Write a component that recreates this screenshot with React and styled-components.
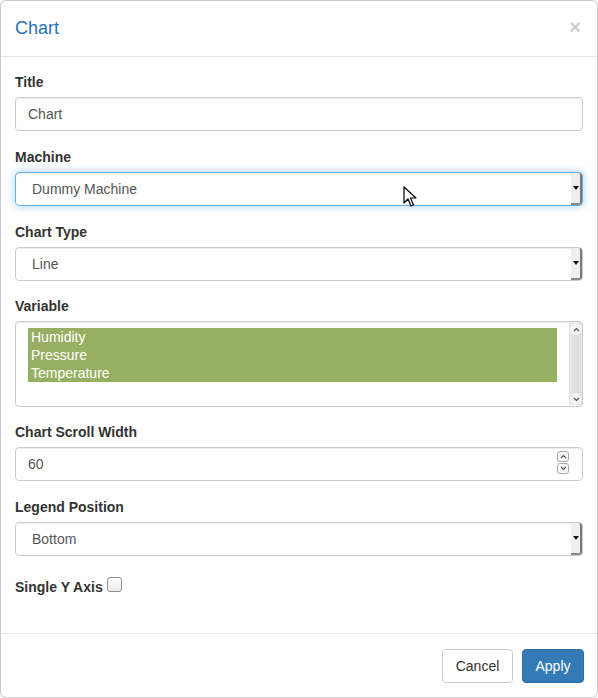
import React from "react";
import styled, { createGlobalStyle } from "styled-components";

const Global = createGlobalStyle`
  html, body { margin: 0; padding: 0; background: #fff; }
  body { font-family: "Liberation Sans", Arial, sans-serif; font-size: 14px; line-height: 1.42857; color: #333; }
  * { box-sizing: border-box; }
`;

const Modal = styled.div`
  position: relative;
  width: 598px;
  height: 698px;
  border: 1px solid rgba(0,0,0,0.2);
  border-radius: 6px;
  background: #fff;
  display: flex;
  flex-direction: column;
  overflow: hidden;
`;

const Header = styled.div`
  display: flex;
  align-items: center;
  justify-content: space-between;
  padding: 14px 15px 15px 14px;
  border-bottom: 1px solid #e5e5e5;
`;

const Title = styled.h4`
  margin: 0;
  font-size: 18px;
  font-weight: 400;
  line-height: 26px;
  color: #2573b6;
`;

const Close = styled.span`
  font-size: 20px;
  font-weight: 700;
  line-height: 1;
  color: #000;
  opacity: 0.2;
  margin-right: 1px;
  margin-top: -3px;
`;

const Body = styled.div`
  flex: 1;
  padding: 15px 14px 0 14px;
`;

const Group = styled.div`
  margin-bottom: ${p => p.$mb ?? 16}px;
`;

const Label = styled.label`
  display: inline-block;
  font-weight: 700;
  margin-bottom: 5px;
  line-height: 20px;
`;

const Input = styled.div`
  position: relative;
  height: ${p => p.$h ?? 34}px;
  border: 1px solid ${p => (p.$focus ? "#66afe9" : "#ccc")};
  border-radius: 4px;
  box-shadow: ${p =>
    p.$focus
      ? "inset 0 1px 1px rgba(0,0,0,.075), 0 0 8px rgba(102,175,233,.6)"
      : "inset 0 1px 1px rgba(0,0,0,.075)"};
  padding: 6px 12px 6px ${p => p.$pl ?? 12}px;
  color: #555;
  font-size: 14px;
  line-height: 20px;
  display: flex;
  align-items: center;
`;

const SelectBtn = styled.div`
  position: absolute;
  right: 0;
  top: 0;
  bottom: 0;
  width: 11px;
  background: #efefef;
  border-right: 2px solid #7a7a7a;
  border-bottom: 2px solid #8a8a8a;
  border-radius: 0 3px 3px 0;
  display: flex;
  align-items: center;
  justify-content: center;
  svg { display: block; }
`;

const ListBox = styled.div`
  position: relative;
  height: 86px;
  border: 1px solid #ccc;
  border-radius: 4px;
  box-shadow: inset 0 1px 1px rgba(0,0,0,.075);
  padding: 6px 25px 6px 12px;
`;

const Option = styled.div`
  background: #97af62;
  color: #fff;
  height: 18px;
  line-height: 18px;
  padding-left: 3px;
  font-size: 14px;
`;

const Scrollbar = styled.div`
  position: absolute;
  top: 1px;
  right: 0;
  bottom: 1px;
  width: 13px;
  background: linear-gradient(to right, #e9e9e9, #dcdcdc 60%, #e4e4e4);
  border-left: 1px solid #e2e2e2;
  display: flex;
  flex-direction: column;
  justify-content: space-between;
  align-items: center;
`;

const ScrollArrow = styled.div`
  width: 12px;
  height: 12px;
  border-radius: 6px;
  background: #f4f4f4;
  display: flex;
  align-items: center;
  justify-content: center;
`;

const Spinner = styled.div`
  position: absolute;
  right: 13px;
  top: 3px;
  display: flex;
  flex-direction: column;
  gap: 1px;
`;

const SpinBtn = styled.div`
  width: 12px;
  height: 11px;
  border: 1px solid #a8a8a8;
  border-radius: 3px;
  background: #fafafa;
  display: flex;
  align-items: center;
  justify-content: center;
`;

const CheckRow = styled.div`
  display: flex;
  align-items: flex-start;
  gap: 4px;
  margin-top: 21px;
`;

const Checkbox = styled.span`
  display: inline-block;
  width: 15px;
  height: 15px;
  border: 1px solid #8f8f8f;
  border-radius: 3px;
  background: linear-gradient(#fdfdfd, #ececec);
`;

const Footer = styled.div`
  display: flex;
  justify-content: flex-end;
  gap: 9px;
  padding: 15px 13px 14px 15px;
  border-top: 1px solid #e5e5e5;
`;

const Button = styled.button`
  height: 34px;
  padding: 6px 12px;
  font-family: "Liberation Sans", Arial, sans-serif;
  font-size: 14px;
  line-height: 20px;
  border-radius: 4px;
  border: 1px solid ${p => (p.$primary ? "#2e6da4" : "#ccc")};
  background: ${p => (p.$primary ? "#337ab7" : "#fff")};
  color: ${p => (p.$primary ? "#fff" : "#333")};
  width: ${p => p.$w}px;
`;

const Cursor = styled.svg`
  position: absolute;
  left: 402px;
  top: 185px;
`;

const Tri = () => (
  <svg width="6" height="4" viewBox="0 0 6 4"><path d="M0 0h6L3 4z" fill="#111" /></svg>
);

const Chev = ({ up }) => (
  <svg width="7" height="5" viewBox="0 0 7 5">
    <path d={up ? "M1 4L3.5 1.5 6 4" : "M1 1l2.5 2.5L6 1"} stroke="#555" strokeWidth="1.2" fill="none" />
  </svg>
);

const Select = ({ value, focus }) => (
  <Input $pl={16} $focus={focus}>
    {value}
    <SelectBtn><Tri /></SelectBtn>
  </Input>
);

export default function App() {
  return (
    <>
      <Global />
      <Modal>
        <Header>
          <Title>Chart</Title>
          <Close>×</Close>
        </Header>
        <Body>
          <Group>
            <Label>Title</Label>
            <Input>Chart</Input>
          </Group>
          <Group>
            <Label>Machine</Label>
            <Select value="Dummy Machine" focus />
          </Group>
          <Group $mb={15}>
            <Label>Chart Type</Label>
            <Select value="Line" />
          </Group>
          <Group $mb={15}>
            <Label>Variable</Label>
            <ListBox>
              <Option>Humidity</Option>
              <Option>Pressure</Option>
              <Option>Temperature</Option>
              <Scrollbar>
                <ScrollArrow><Chev up /></ScrollArrow>
                <ScrollArrow><Chev /></ScrollArrow>
              </Scrollbar>
            </ListBox>
          </Group>
          <Group>
            <Label>Chart Scroll Width</Label>
            <Input>
              60
              <Spinner>
                <SpinBtn><Chev up /></SpinBtn>
                <SpinBtn><Chev /></SpinBtn>
              </Spinner>
            </Input>
          </Group>
          <Group>
            <Label>Legend Position</Label>
            <Select value="Bottom" />
          </Group>
          <CheckRow>
            <Label>Single Y Axis</Label>
            <Checkbox />
          </CheckRow>
        </Body>
        <Footer>
          <Button $w={71}>Cancel</Button>
          <Button $primary $w={62}>Apply</Button>
        </Footer>
        <Cursor width="14" height="22" viewBox="0 0 14 22">
          <path d="M1 1v16l4-4 3 7 2.5-1-3-7h5.5z" fill="#fff" stroke="#000" strokeWidth="1.2" strokeLinejoin="round" />
        </Cursor>
      </Modal>
    </>
  );
}
